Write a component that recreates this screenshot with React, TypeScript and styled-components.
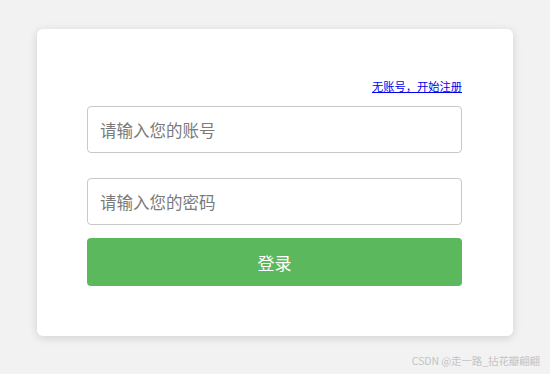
import { createGlobalStyle, styled } from 'styled-components';

const GlobalStyle = createGlobalStyle`
  html,
  body {
    margin: 0;
    height: 100%;
    background: #f2f2f2;
    font-family: 'Noto Sans CJK SC', 'Microsoft YaHei', sans-serif;
  }

  #root {
    min-height: 100%;
  }
`;

const App = () => {
  return (
    <Page>
      <GlobalStyle />
      <Card>
        <LinkRow>
          <RegisterLink href="#register">无账号，开始注册</RegisterLink>
        </LinkRow>
        <Field type="text" placeholder="请输入您的账号" $gap={25} />
        <Field type="password" placeholder="请输入您的密码" $gap={13} />
        <SubmitButton type="button">登录</SubmitButton>
      </Card>
      <Watermark>CSDN @走一路_拈花瓣翩翩</Watermark>
    </Page>
  );
};

export default App;

const Page = styled.div`
  position: relative;
  display: flex;
  justify-content: center;
  height: 374px;
  padding-top: 29px;
  box-sizing: border-box;
`;

const Card = styled.div`
  display: flex;
  flex-direction: column;
  width: 476px;
  height: 307px;
  padding: 48px 51px 0 50px;
  box-sizing: border-box;

  background: #fff;
  border-radius: 6px;
  box-shadow: 0 2px 10px rgba(0, 0, 0, 0.14);
`;

const LinkRow = styled.div`
  display: flex;
  justify-content: flex-end;
  height: 18px;
  margin-bottom: 11px;
`;

const RegisterLink = styled.a`
  font-size: 11.25px;
  line-height: 18px;
  color: #0000ee;
  text-decoration: underline;
`;

const Field = styled.input<{ $gap: number }>`
  display: block;
  width: 100%;
  height: 47px;
  margin: 0 0 ${({ $gap }) => $gap}px;
  padding: 0 12px;
  box-sizing: border-box;

  font-family: inherit;
  font-size: 16.5px;
  color: #333;
  background: #fff;
  border: 1px solid #c8c8c8;
  border-radius: 4px;
  outline: none;

  &::placeholder {
    color: #7a7a7a;
  }
`;

const SubmitButton = styled.button`
  width: 100%;
  height: 48px;
  padding: 0;

  font-family: inherit;
  font-size: 17px;
  color: #fff;
  background: #5cb85c;
  border: none;
  border-radius: 4px;
  cursor: pointer;
`;

const Watermark = styled.span`
  position: absolute;
  right: 10px;
  bottom: 6px;

  font-size: 10.5px;
  color: #c4c4c4;
  letter-spacing: -0.1px;
`;
